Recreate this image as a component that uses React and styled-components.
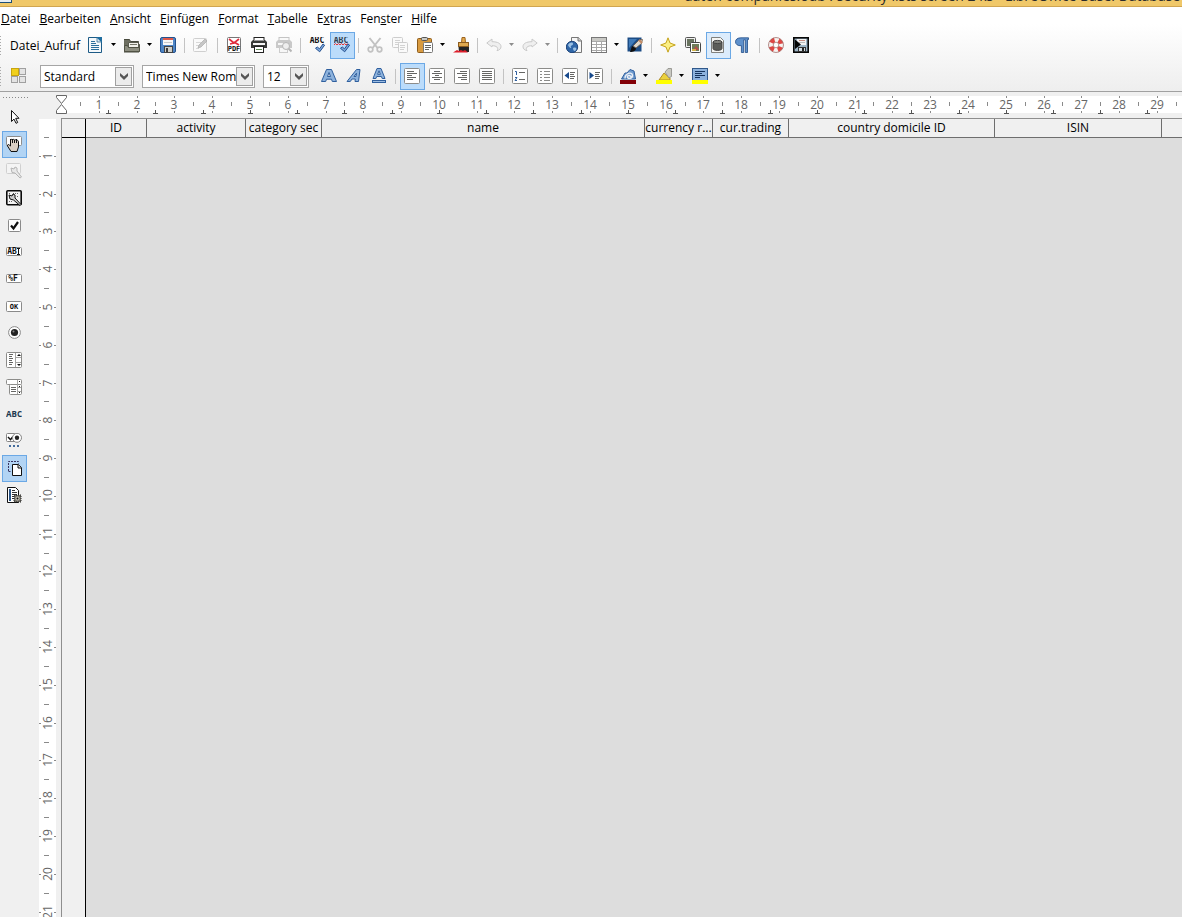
import React, { useEffect, useState } from 'react';
import styled, { createGlobalStyle } from 'styled-components';

// pixels per centimetre on both rulers
const CM = 37.79;
const BLUE = '#2f5f9e';

const menus = ['Datei', 'Bearbeiten', 'Ansicht', 'Einfügen', 'Format', 'Tabelle', 'Extras', 'Fenster', 'Hilfe'];
const hotkeys = { Extras: 1, Fenster: 3 };

const columns = [
  { label: 'ID', width: 61 },
  { label: 'activity', width: 99 },
  { label: 'category sec', width: 76 },
  { label: 'name', width: 323 },
  { label: 'currency r...', width: 68 },
  { label: 'cur.trading', width: 76 },
  { label: 'country domicile ID', width: 206 },
  { label: 'ISIN', width: 167 },
];

const Sheet = ({ x = 0, y = 0, w = 16, h = 16, fill = '#fff', stroke = '#8c8c8a' }) => (
  <rect x={x + 0.5} y={y + 0.5} width={w - 1} height={h - 1} rx="1" fill={fill} stroke={stroke} />
);

const Lines = ({ rows, color = '#666664' }) => (
  <g stroke={color} strokeWidth="1">
    {rows.map(([x1, y, x2], i) => <path key={i} d={`M${x1} ${y + 0.5}H${x2}`} />)}
  </g>
);

const IconText = ({ x, y, size = 7, fill = '#111', children }) => (
  <text x={x} y={y} fontSize={size} fontWeight="700" fontFamily="DejaVu Sans Mono, monospace" fill={fill} textAnchor="middle">{children}</text>
);

const Check = () => (
  <path d="M6.5 11.3L8.3 10l2.2 1.8L14 7l1.6 1.2-4.9 6.6z" fill="#7fa9dc" stroke="#24508f" strokeLinejoin="round" />
);

const icons = {
  newDoc: (
    <>
      <path d="M.5.5h8.5l4.5 4.5v10.500H.5z" fill="#f4f8fb" stroke="#1d5b86" />
      <path d="M8 0h6v6z" fill="#1f6d9f" />
      <path d="M9 1v4h4" fill="#dcebf4" stroke="#1d5b86" strokeWidth="0.7" />
      <Lines color="#2b6f9c" rows={[[3, 4, 7], [3, 6, 8], [3, 8, 11], [3, 10, 11], [3, 12, 11]]} />
    </>
  ),
  open: (
    <>
      <path d="M-.5 2.500h6l1 2h8v3h1l-.5 7.500H0z" fill="#6d6e60" stroke="#484a3e" />
      <path d="M4.500 5.500h10v6h-10z" fill="#f1f1ea" stroke="#5b5c50" />
      <path d="M6 7.500h7" stroke="#77786c" />
      <path d="M.5 14.500v-6h3l1 2h11v4z" fill="#8d8e80" stroke="#505244" />
    </>
  ),
  save: (
    <>
      <rect x=".5" y=".5" width="15" height="15" rx="1.5" fill="#4f86c6" stroke="#24518c" />
      <rect x="3" y="1" width="10" height="7" fill="#f8f8f8" />
      <rect x="3" y="1" width="10" height="2" fill="#df5a4c" />
      <path d="M4 5.500h8" stroke="#c9c9c9" />
      <rect x="4.5" y="9.5" width="8" height="6" fill="#cfcfc9" stroke="#444" />
      <rect x="6" y="11" width="2" height="4" fill="#3c3c3c" />
    </>
  ),
  edit: (
    <>
      <Sheet y={1} w={14} h={14} stroke="#cfcfcf" fill="#fafafa" />
      <Lines color="#d8d8d8" rows={[[3, 5, 8], [3, 8, 7], [3, 11, 6]]} />
      <path d="M5 11l1-3 6-6 2 2-6 6z" fill="#c6c6c6" stroke="#aaa" strokeWidth=".7" />
    </>
  ),
  pdf: (
    <>
      <Sheet x={1} w={14} stroke="#777" />
      <path d="M3 2l5 4 5-4M8 6L4 7M8 5l5 3" stroke="#e02b3c" strokeWidth="1.7" fill="none" />
      <IconText x={8} y={14}>PDF</IconText>
    </>
  ),
  print: (
    <>
      <rect x="3" y=".5" width="10" height="5" fill="#fff" stroke="#222" />
      <path d="M0 5l2-2h12l2 2v6H0z" fill="#393b39" />
      <path d="M3 3.500h10" stroke="#9a9a9a" />
      <rect x="2" y="6" width="12" height="2" fill="#f7f7f7" />
      <rect x="3.5" y="9.5" width="9" height="6" fill="#fff" stroke="#222" />
      <path d="M5 12.500h6" stroke="#5c8750" />
    </>
  ),
  preview: (
    <>
      <rect x="3" y=".5" width="10" height="5" fill="#f9f9f9" stroke="#c4c4c4" />
      <path d="M0 5l2-2h12l2 2v6H0z" fill="#c9c9c9" />
      <rect x="2" y="6" width="9" height="2" fill="#f7f7f7" />
      <rect x="3.5" y="10.5" width="8" height="5" fill="#f7f7f7" stroke="#ccc" />
      <circle cx="10" cy="9" r="3.5" fill="#eee" stroke="#b5b5b5" />
      <path d="M12.500 11.500l3 3" stroke="#b5b5b5" strokeWidth="2" />
    </>
  ),
  spell: (
    <>
      <IconText x={8} y={6} size={8}>ABC</IconText>
      <Check />
    </>
  ),
  autoSpell: (
    <>
      <IconText x={7} y={6} size={8} fill="#33414e">ABC</IconText>
      <path d="M0 8l1.500-1.500L3 8l1.500-1.500L6 8l1.500-1.500L9 8l1.500-1.500L12 8l1.500-1.500" fill="none" stroke="#e33" />
      <Check />
    </>
  ),
  cut: (
    <g fill="none" stroke="#c2c2c2">
      <path d="M2.500 1l8 10M13.500 1l-8 10" strokeWidth="2" />
      <circle cx="3.500" cy="12.500" r="2.300" strokeWidth="1.700" />
      <circle cx="12.500" cy="12.500" r="2.300" strokeWidth="1.700" />
    </g>
  ),
  copy: (
    <>
      <Sheet w={11} h={11} stroke="#cdcdcd" fill="#fafafa" />
      <Lines color="#d2d2d2" rows={[[3, 3, 8], [3, 5, 8], [3, 7, 6]]} />
      <Sheet x={6} y={5} w={10} h={11} stroke="#cdcdcd" fill="#fafafa" />
      <Lines color="#d2d2d2" rows={[[8, 8, 13], [8, 10, 13], [8, 12, 12]]} />
    </>
  ),
  paste: (
    <>
      <rect x=".5" y="1.5" width="14" height="14" rx="1" fill="#d99b40" stroke="#8c5c1d" />
      <rect x="4.5" y=".5" width="6" height="3" rx="1" fill="#c9c9c5" stroke="#555" />
      <Sheet x={6} y={5} w={10} h={11} stroke="#777" />
      <Lines rows={[[8, 8, 14], [8, 10, 14], [8, 12, 12]]} />
    </>
  ),
  brush: (
    <>
      <path d="M9 .5h3l.5 5.500h-4z" fill="#e5a94b" stroke="#9b6420" />
      <rect x="5.5" y="5.5" width="10" height="4" fill="#e0a94f" stroke="#8c5c20" />
      <path d="M5.500 10H16v5H6z" fill="#242424" />
      <path d="M0 15.500L4 13l2 1 2-1 2 1 2-1 3 2.500z" fill="#dd1e2b" />
    </>
  ),
  undo: <path d="M.8 6L6 2v2.700c6 0 9 2 9 5 0 2-1.600 3.500-4 4 2-3-.5-5-5-5V10z" fill="#efefef" stroke="#c9c9c9" />,
  redo: <path d="M15.200 6L10 2v2.700c-6 0-9 2-9 5 0 2 1.600 3.500 4 4-2-3 .5-5 5-5V10z" fill="#efefef" stroke="#c9c9c9" />,
  link: (
    <>
      <path d="M5.500.5h7l3 3v12h-10z" fill="#f6f6f6" stroke="#777" />
      <path d="M12 0v4h4" fill="#ccc" stroke="#777" />
      <circle cx="6" cy="10" r="5.700" fill="#2f66a8" stroke="#1d447b" />
      <path d="M2 8c2-3 5-3 5-1s-3 1-2 3-2 1-3-2zM7 11c3-1 4 0 3 2s-3 1-3-2z" fill="#9cc1e4" />
    </>
  ),
  table: (
    <>
      <rect x=".5" y=".5" width="15" height="15" fill="#fff" stroke="#777" />
      <path d="M1 1h14v3H1z" fill="#c9c9c5" />
      <path d="M1 4.500h14M1 7.500h14M1 10.500h14M1 13.500h14M5.500 4v11M10.500 4v11" stroke="#a9a9a9" />
    </>
  ),
  draw: (
    <>
      <path d="M.5.500h14v14H.5z" fill="#1c4c85" />
      <path d="M2 2h8L2 11z" fill="#3f7ab8" />
      <path d="M3 15l2-6 4 2c0 3-3 4-6 4z" fill="#111" />
      <path d="M6 9l6-6 3.500-.5-1 4L9 11z" fill="#ded8cd" stroke="#6a5642" strokeWidth=".8" />
      <path d="M12 3l3 3" stroke="#c38a62" strokeWidth="2" />
    </>
  ),
  star: <path d="M8 .8L10 6l5.300 2-5.300 2-2 5.200L6 10 .7 8 6 6z" fill="#fbef84" stroke="#c5a31a" />,
  gallery: (
    <>
      <Sheet w={11} h={11} stroke="#555" fill="#eee" />
      <rect x="2" y="2" width="7" height="7" fill="#69735f" />
      <Sheet x={5} y={5} w={11} h={11} stroke="#444" />
      <rect x="7" y="7" width="7" height="7" fill="#6f7c58" />
      <path d="M8 13l3-4 3 4z" fill="#b5514b" />
      <path d="M7 12h4v2H7z" fill="#d3b34a" />
    </>
  ),
  dataSources: (
    <>
      <path d="M1.500.5h9l3 3v12h-12z" fill="#f5f5f3" stroke="#80807d" />
      <path d="M3 5v6.500c0 2.500 9 2.500 9 0V5z" fill="#5b5c59" stroke="#444" />
      <ellipse cx="7.500" cy="5" rx="4.500" ry="1.600" fill="#83847f" stroke="#444" />
    </>
  ),
  pilcrow: <path d="M13.500.8v1.700h-1v13h-2.200V2.800H8.700v12.700H6.400V8.700C2.500 9 .5 7.200.5 4.800S2.500.8 6 .8z" fill="#5f91cc" stroke="#1f4b86" strokeWidth=".8" />,
  help: (
    <>
      <circle cx="8" cy="8" r="5.200" fill="none" stroke="#f7f3f0" strokeWidth="4.500" />
      <circle cx="8" cy="8" r="5.200" fill="none" stroke="#de4744" strokeWidth="4.500" strokeDasharray="4.080 4.080" strokeDashoffset="-2" />
      <circle cx="8" cy="8" r="7.500" fill="none" stroke="#96605c" strokeWidth=".7" />
      <circle cx="8" cy="8" r="2.800" fill="#fff" stroke="#96605c" strokeWidth=".7" />
    </>
  ),
  macro: (
    <>
      <rect x=".8" y=".8" width="14.400" height="14.400" fill="#9db4c5" stroke="#080808" strokeWidth="1.600" />
      <rect x="4" y="2" width="9" height="6" fill="#f2f2f2" />
      <path d="M6 3.500h6" stroke="#c78b80" />
      <path d="M6 5.500h6" stroke="#bbb" />
      <path d="M2 2.500L8 7.500 2 12z" fill="#050505" />
      <rect x="5.5" y="10.5" width="7" height="4" fill="#d3dce2" stroke="#333" />
      <rect x="9" y="11" width="2" height="3" fill="#222" />
    </>
  ),
  styles: (
    <>
      <rect x="1.5" y=".5" width="7" height="7" fill="#f1d01c" stroke="#c8a410" />
      <g fill="#e4e4e4" stroke="#a0a0a0">
        <rect x="9.5" y=".5" width="6" height="6" />
        <rect x="1.5" y="8.5" width="6" height="6" />
        <rect x="9.5" y="8.5" width="6" height="6" />
      </g>
    </>
  ),
  bold: <path d="M.5 13.500L5.500 1.500h5l5 12h-4.200l-.8-2.300h-5l-.8 2.300zM6.500 8.500h3L8 4.500z" fill="#8db2dc" stroke={BLUE} fillRule="evenodd" />,
  italic: <path d="M1 13.500L10.500 1.500h3.500l-1.500 12H9l.3-2.500H6l-1.700 2.500zM8 8.500h2l.5-3.300z" fill="#8db2dc" stroke={BLUE} fillRule="evenodd" />,
  underline: (
    <>
      <path d="M2 10.500L6 .5h4l4 10h-2.800l-.8-2H5.700l-.8 2zM6.600 6.300h2.800L8 2.800z" fill="#8db2dc" stroke={BLUE} fillRule="evenodd" />
      <rect x="1.5" y="12.5" width="13" height="2" fill="#9dbde2" stroke={BLUE} />
    </>
  ),
  left: <><Sheet /><Lines rows={[[3, 3, 10], [3, 5, 13], [3, 7, 8], [3, 9, 12], [3, 11, 9]]} /></>,
  center: <><Sheet /><Lines rows={[[5, 3, 11], [3, 5, 13], [6, 7, 10], [3, 9, 13], [5, 11, 11]]} /></>,
  right: <><Sheet /><Lines rows={[[6, 3, 13], [3, 5, 13], [8, 7, 13], [4, 9, 13], [7, 11, 13]]} /></>,
  justify: <><Sheet /><Lines rows={[[3, 3, 13], [3, 5, 13], [3, 7, 13], [3, 9, 13], [3, 11, 13]]} /></>,
  numbered: (
    <>
      <Sheet />
      <path d="M3 3.500h1.500V7M3 9.500h2L3 12.500h2" fill="none" stroke={BLUE} />
      <Lines rows={[[7, 4, 13], [7, 11, 13]]} />
    </>
  ),
  bullets: <><Sheet /><Lines rows={[[3, 3, 5], [3, 6, 5], [3, 9, 5], [3, 12, 5], [7, 3, 13], [7, 6, 13], [7, 9, 13], [7, 12, 13]]} color="#8b8b89" /></>,
  outdent: <><Sheet /><path d="M2.500 7.500L7 4v7z" fill="#184a8c" /><Lines rows={[[8, 4, 13], [8, 6, 12], [8, 8, 13], [8, 10, 12]]} /></>,
  indent: <><Sheet /><path d="M7 7.500L2.500 4v7z" fill="#184a8c" /><Lines rows={[[8, 4, 13], [8, 6, 12], [8, 8, 13], [8, 10, 12]]} /></>,
  fontColor: (
    <>
      <path d="M1.500 11L5 5h2l3-3.500 4 1.500 1.500 8z" fill="#6f9bcf" stroke={BLUE} />
      <path d="M5 10.500C5 5 12 3.500 12.500 7s-5 4.500-5 2 4-2 4 1.500" fill="none" stroke="#e9edf4" strokeWidth="1.400" />
      <rect y="12" width="16" height="4" fill="#830007" />
    </>
  ),
  highlight: (
    <>
      <path d="M3 12l5-7 6 5v2z" fill="#ead13d" stroke="#b28d22" />
      <path d="M9 4l3-3.500h3.500v8L13 10z" fill="#c8c8c2" stroke="#8a8a84" strokeWidth=".8" />
      <rect y="12" width="16" height="4" fill="#ff0" />
    </>
  ),
  background: (
    <>
      <rect x=".5" y=".5" width="15" height="12" fill="#8db2dd" stroke="#30588b" />
      <Lines color="#15335c" rows={[[3, 3, 13], [3, 5, 10], [3, 7, 13], [3, 9, 8]]} />
      <rect y="12" width="16" height="4" fill="#ff0" />
    </>
  ),
  pointer: <path d="M5.500 1.500v11l2.500-2.400 2 4.200 1.700-.8-2-4.200H13z" fill="#fff" stroke="#111" />,
  hand: (
    <>
      <rect x=".5" y=".5" width="15" height="9" rx="1" fill="#fff" stroke="#8d8d8d" />
      <path d="M4.500 10V4.500c0-1.500 2-1.500 2 0 0-1.500 2-1.500 2 0 0-1.200 2-1 2 .5 0-1 2-1 2 .7V11l-1.500 4.500H5L1.500 10c-.5-1.500 1-2 2-.8z" fill="#d9cfc4" stroke="#111" />
      <path d="M4.500 3v3M6.500 3v4M8.500 4v3M10.500 3v4" stroke="#111" />
    </>
  ),
  wrenchOff: (
    <>
      <Sheet w={15} h={11} stroke="#d0d0d0" fill="#f4f4f4" />
      <path d="M5 5l3 1 1-2 2 1v3l4.500 6-1.500 1-5-5-3-.5z" fill="#e8e8e8" stroke="#b5b5b5" />
    </>
  ),
  wrench: (
    <>
      <rect x=".8" y=".8" width="14.400" height="14" rx="1" fill="#f3f3f3" stroke="#0a0a0a" strokeWidth="1.600" />
      <path d="M3 3.500h2M7 3.500h6M11 6.500h2M3 11.500h3" stroke="#666" strokeDasharray="1 1" />
      <path d="M3 5l3 1 1-2 2 1v3l6 6.500-1 1L7.500 10 4 9z" fill="#ccc" stroke="#111" />
    </>
  ),
  checkbox: (
    <>
      <Sheet x={2} y={2} w={13} h={13} stroke="#8a8a8a" />
      <path d="M5 8.500l2.500 3L12 5" fill="none" stroke="#111" strokeWidth="2.200" />
    </>
  ),
  textBox: (
    <>
      <Sheet y={3} h={9} stroke="#8a8a8a" />
      <IconText x={6} y={10} size={8}>AB</IconText>
      <path d="M11 4.500h3M11 10.500h3M12.500 5v5" stroke="#111" />
    </>
  ),
  formatted: <><Sheet y={3} h={9} stroke="#8a8a8a" /><IconText x={7} y={10} size={8}>%F</IconText></>,
  okButton: <><Sheet y={3} h={11} stroke="#8a8a8a" /><IconText x={8} y={11}>OK</IconText></>,
  radio: (
    <>
      <circle cx="8.500" cy="7.500" r="5.900" fill="#fff" stroke="#8a8a8a" />
      <circle cx="8.500" cy="7.500" r="3.600" fill="#222" />
      <circle cx="7.500" cy="6.500" r="1" fill="#888" />
    </>
  ),
  listBox: (
    <>
      <Sheet />
      <path d="M9.500 1v14M10 5.500h5M10 10.500h5" stroke="#a5a5a3" />
      <Lines rows={[[3, 2, 7], [3, 4, 6], [3, 6, 7], [3, 8, 6], [3, 10, 7], [3, 12, 6]]} />
      <path d="M11 4h4l-2-2zM11 12h4l-2 2z" fill="#111" />
    </>
  ),
  comboBox: (
    <>
      <Sheet h={6} />
      <Sheet x={3} y={5} w={13} h={11} />
      <path d="M11.500 1v14M12 8.500h3M12 12.500h3" stroke="#a5a5a3" />
      <Lines rows={[[5, 8, 10], [5, 10, 10], [5, 12, 10]]} />
      <path d="M13 2h1v1h-1zM13 7h1v1h-1zM13 13h1v1h-1z" fill="#111" />
    </>
  ),
  label: <text x="8" y="11" fontSize="8" fontWeight="700" fontFamily="Open Sans, sans-serif" fill="#20384f" textAnchor="middle">ABC</text>,
  more: (
    <>
      <Sheet w={10} h={9} stroke="#858585" />
      <path d="M2 4l2.500 2.700L7 3.500" fill="none" stroke="#111" strokeWidth="1.500" />
      <circle cx="11" cy="4.800" r="4.500" fill="#fff" stroke="#858585" />
      <circle cx="11" cy="4.800" r="2.200" fill="#222" />
      <path d="M3 12h2v2H3zM7 12h2v2H7zM11 12h2v2h-2z" fill="#456d9c" />
    </>
  ),
  design: (
    <>
      <path d="M2.500 11V1.500h10v2M2.500 11.500h3" fill="none" stroke="#3a3560" strokeDasharray="2 1" />
      <path d="M6.500 4.500h6l3 3v8h-9z" fill="#fff" stroke="#111" />
      <path d="M12 4.500v3.500h3.500" fill="#ddd" stroke="#111" />
    </>
  ),
  wizard: (
    <>
      <path d="M1.500.5h8l3 3v12h-11z" fill="#fff" stroke="#111" />
      <path d="M3 2h2v12H3z" fill="#2c5688" />
      <Lines color="#333" rows={[[6, 3, 9], [6, 5, 11], [6, 7, 11], [6, 9, 8], [6, 11, 8]]} />
      <rect x="8" y="8" width="7" height="7" fill="#77756c" stroke="#222" strokeDasharray="1 1" />
      <circle cx="11.500" cy="11.500" r="2" fill="#c9c5b7" />
      <circle cx="11.500" cy="11.500" r="1" fill="#111" />
    </>
  ),
};

const standardBar = [
  ['newDoc', 'Neu', 'drop'], ['open', 'Öffnen', 'drop'], ['save', 'Speichern'], null,
  ['edit', 'Datei bearbeiten', 'off'], null,
  ['pdf', 'Als PDF exportieren'], ['print', 'Drucken'], ['preview', 'Seitenansicht', 'off'], null,
  ['spell', 'Rechtschreibung'], ['autoSpell', 'Automatische Rechtschreibprüfung', 'on'], null,
  ['cut', 'Ausschneiden', 'off'], ['copy', 'Kopieren', 'off'], ['paste', 'Einfügen', 'drop'], ['brush', 'Format übertragen'], null,
  ['undo', 'Rückgängig', 'off drop'], ['redo', 'Wiederherstellen', 'off drop'], null,
  ['link', 'Hyperlink'], ['table', 'Tabelle', 'drop'], ['draw', 'Zeichnen'], null,
  ['star', 'Navigator'], ['gallery', 'Gallery'], ['dataSources', 'Datenquellen', 'soft'], ['pilcrow', 'Steuerzeichen'], null,
  ['help', 'Hilfe'], ['macro', 'Makro'],
];

const formatBar = [
  ['bold', 'Fett'], ['italic', 'Kursiv'], ['underline', 'Unterstrichen'], null,
  ['left', 'Linksbündig', 'on'], ['center', 'Zentriert'], ['right', 'Rechtsbündig'], ['justify', 'Blocksatz'], null,
  ['numbered', 'Nummerierung'], ['bullets', 'Aufzählung'], ['outdent', 'Einzug verringern'], ['indent', 'Einzug erhöhen'], null,
  ['fontColor', 'Zeichenfarbe', 'drop'], ['highlight', 'Hervorheben', 'drop'], ['background', 'Hintergrundfarbe', 'drop'],
];

const controls = [
  ['pointer', 'Auswahl'], ['hand', 'Entwurfsmodus', 'on'], ['wrenchOff', 'Kontrollfeld', 'off'], ['wrench', 'Formular'],
  ['checkbox', 'Markierfeld'], ['textBox', 'Textfeld'], ['formatted', 'Formatiertes Feld'], ['okButton', 'Schaltfläche'],
  ['radio', 'Optionsfeld'], ['listBox', 'Listenfeld'], ['comboBox', 'Kombinationsfeld'], ['label', 'Beschriftungsfeld'],
  ['more', 'Weitere Steuerelemente'], ['design', 'Formular-Entwurf', 'on'], ['wizard', 'Assistenten'],
];

const Icon = ({ name }) => (
  <svg width="16" height="16" viewBox="0 0 16 16" aria-hidden="true">{icons[name]}</svg>
);

const ToolItems = ({ items }) => items.map((item, i) => {
  if (!item) return <Separator key={i} />;
  const [name, title, flags = ''] = item;
  const off = flags.includes('off');
  return (
    <React.Fragment key={i}>
      <ToolButton type="button" aria-label={title} disabled={off} $state={flags}>
        <Icon name={name} />
      </ToolButton>
      {flags.includes('drop') && (
        <DropButton type="button" aria-label={`${title}: Auswahl`} disabled={off}>
          <svg width="5" height="3" viewBox="0 0 5 3"><path d="M0 0h5L2.500 3z" fill={off ? '#8d8d8d' : '#000'} /></svg>
        </DropButton>
      )}
    </React.Fragment>
  );
});

const Combo = ({ label, value, width }) => (
  <ComboBox $width={width}>
    <ComboSelect aria-label={label} defaultValue={value}>
      <option>{value}</option>
    </ComboSelect>
    <ComboArrow>
      <svg width="8" height="7" viewBox="0 0 8 7"><path d="M0 0l4 3.500L8 0v3L4 7 0 3z" fill="#555" /></svg>
    </ComboArrow>
  </ComboBox>
);

const MenuLabel = ({ text }) => {
  const at = hotkeys[text] || 0;
  return <>{text.slice(0, at)}<u>{text[at]}</u>{text.slice(at + 1)}</>;
};

const range = (n) => Array.from({ length: n }, (_, i) => i + 1);

const useWindowSize = () => {
  const read = () => ({ width: window.innerWidth, height: window.innerHeight });
  const [size, setSize] = useState(read);
  useEffect(() => {
    const onResize = () => setSize(read());
    window.addEventListener('resize', onResize);
    return () => window.removeEventListener('resize', onResize);
  }, []);
  return size;
};

const HorizontalRuler = ({ length }) => {
  const count = Math.floor(length / CM);
  return (
    <RulerTop>
      <svg width="100%" height="22" shapeRendering="crispEdges">
        <rect x="5" y="4" width="100%" height="17" fill="#fff" />
        {range(count).map((n) => {
          const x = Math.round(n * CM) + 5;
          return (
            <g key={n} fill="#8a8a8a">
              <rect x={x} y="4" width="1" height="2" />
              <rect x={x} y="19" width="1" height="2" />
              <RulerText x={x} y="17">{n}</RulerText>
            </g>
          );
        })}
        {range(count + 1).map((n) => (
          <rect key={n} x={Math.round((n - 0.5) * CM) + 5} y="10" width="1" height="4" fill="#8a8a8a" />
        ))}
        {range(count).map((n) => {
          const x = Math.round(n * CM * 1.25) + 5;
          return <path key={n} d={`M${x} 18h1v3h2v1h-5v-1h2z`} fill="#555" />;
        })}
        <g shapeRendering="auto" fill="#fff" stroke="#666">
          <path d="M.5 3.500h10v2l-5 6-5-6z" />
          <path d="M.5 21.500h10v-3l-5-6-5 6z" />
        </g>
      </svg>
    </RulerTop>
  );
};

const VerticalRuler = ({ length }) => {
  const count = Math.floor(length / CM);
  return (
    <RulerLeft>
      <svg width="17" height="100%" shapeRendering="crispEdges">
        {range(count).map((n) => {
          const y = Math.round(n * CM) - 1;
          return (
            <g key={n} fill="#8a8a8a">
              <rect x="0" y={y} width="2" height="1" />
              <rect x="15" y={y} width="2" height="1" />
              <RulerText transform={`translate(13 ${y}) rotate(-90)`}>{n}</RulerText>
            </g>
          );
        })}
        {range(count + 1).map((n) => (
          <rect key={n} x="5" y={Math.round((n - 0.5) * CM) - 1} width="5" height="1" fill="#8a8a8a" />
        ))}
      </svg>
    </RulerLeft>
  );
};

const App = () => {
  const { width, height } = useWindowSize();
  return (
    <Window>
      <GlobalStyle />
      <TitleBar>
        <WindowIcon />
        <Title>daten companies.odb : security lists screen 2 ks - LibreOffice Base: Database</Title>
      </TitleBar>
      <Chrome>
        <MenuBar>
          {menus.map((text) => <MenuItem key={text} type="button"><MenuLabel text={text} /></MenuItem>)}
        </MenuBar>
        <Toolbar>
          <Grip />
          <MacroButton type="button">Datei_Aufruf</MacroButton>
          <ToolItems items={standardBar} />
        </Toolbar>
        <Toolbar>
          <Grip />
          <StylesButton type="button" aria-label="Formatvorlagen"><Icon name="styles" /></StylesButton>
          <Combos>
            <Combo label="Vorlage" value="Standard" width={94} />
            <Combo label="Schriftart" value="Times New Roman" width={113} />
            <Combo label="Schriftgröße" value="12" width={46} />
          </Combos>
          <ToolItems items={formatBar} />
        </Toolbar>
      </Chrome>
      <Workspace>
        <Sidebar>
          <SideGrip />
          {controls.map(([name, title, flags = '']) => (
            <SideButton key={name} type="button" aria-label={title} $state={flags}><Icon name={name} /></SideButton>
          ))}
        </Sidebar>
        <Editor>
          <HorizontalRuler length={width - 61} />
          <VerticalRuler length={height - 118} />
          <Grid>
            <HeaderTable>
              <colgroup>
                <Col $width={24} />
                {columns.map((c) => <Col key={c.label} $width={c.width} />)}
                <col />
              </colgroup>
              <thead>
                <tr>
                  <CornerCell />
                  {columns.map((c) => <HeaderCell key={c.label} scope="col">{c.label}</HeaderCell>)}
                  <LastCell />
                </tr>
              </thead>
            </HeaderTable>
            <GridBody><RowGutter /></GridBody>
          </Grid>
        </Editor>
      </Workspace>
    </Window>
  );
};

export default App;

const GlobalStyle = createGlobalStyle`
  * {
    box-sizing: border-box;
  }
  body {
    margin: 0;
  }
  body, button, select {
    font-family: 'Open Sans', 'Noto Sans', sans-serif;
    font-size: 12px;
    color: #000;
  }
  button {
    border: 0;
    padding: 0;
    background: none;
  }
  svg {
    display: block;
    flex: none;
  }
`
const Window = styled.div`
  display: flex;
  flex-direction: column;
  height: 100vh;
  overflow: hidden;
  background: #f0f0f0;
`
const TitleBar = styled.header`
  display: flex;
  flex: none;
  align-items: flex-end;
  justify-content: space-between;
  height: 7px;
  overflow: hidden;
  background: #f0c869;
  border-bottom: 1px solid #d0a550;
`
const WindowIcon = styled.span`
  width: 12px;
  height: 3px;
  margin-bottom: 3px;
  background: #e8eef2;
  border: solid #1d4f78;
  border-width: 0 1px 1px 0;
`
const Title = styled.span`
  flex: none;
  width: 498px;
  overflow: hidden;
  font-size: 14px;
  line-height: 20px;
  white-space: nowrap;
  color: #2b2b2b;
`
const Chrome = styled.div`
  flex: none;
  background: linear-gradient(#fff 20%, #eeeeee);
  border-bottom: 1px solid #a0a0a0;
`
const MenuBar = styled.nav`
  display: flex;
  gap: 9px;
  height: 23px;
  padding-left: 1px;
`
const MenuItem = styled.button`
  line-height: 23px;
`
const Toolbar = styled.div`
  display: flex;
  align-items: center;
  padding: 2px 0;
  &:last-child {
    padding-bottom: 1px;
  }
`
const Grip = styled.span`
  flex: none;
  width: 1px;
  height: 19px;
  background: repeating-linear-gradient(#aaa 0 1px, transparent 1px 3px);
`
const MacroButton = styled.button`
  width: 83px;
  padding-left: 9px;
  text-align: left;
  white-space: nowrap;
`
const ToolButton = styled.button`
  display: flex;
  flex: none;
  align-items: flex-start;
  width: 25px;
  height: 27px;
  padding: 5px 0 0 4px;
  background: ${(p) => (p.$state.includes('on') ? '#bbdcfb' : p.$state.includes('soft') ? '#dcecfc' : 'none')};
  box-shadow: ${(p) => (p.$state.includes('on') || p.$state.includes('soft') ? 'inset 0 0 0 1px #6ba8e5' : 'none')};
`
const DropButton = styled.button`
  display: flex;
  flex: none;
  align-items: flex-start;
  justify-content: center;
  width: 9px;
  height: 27px;
  margin-right: 2px;
  padding-top: 11px;
`
const Separator = styled.span`
  flex: none;
  width: 1px;
  height: 15px;
  margin: 0 4px 0 3px;
  background: #c3c3c3;
`
const StylesButton = styled.button`
  width: 39px;
  height: 27px;
  padding: 5px 0 6px 9px;
`
const Combos = styled.div`
  display: flex;
  gap: 8px;
  padding-right: 8px;
`
const ComboBox = styled.span`
  display: flex;
  width: ${(p) => p.$width}px;
  height: 23px;
  padding: 1px;
  background: #fff;
  border: 1px solid #a5a5a5;
`
const ComboSelect = styled.select`
  flex: 1;
  min-width: 0;
  padding: 0 0 0 2px;
  overflow: hidden;
  appearance: none;
  background: none;
  border: 0;
`
const ComboArrow = styled.span`
  display: flex;
  flex: none;
  align-items: center;
  justify-content: center;
  width: 17px;
  background: #ececec;
  border: 1px solid #a0a0a0;
`
const Workspace = styled.div`
  display: flex;
  flex: 1;
  min-height: 0;
`
const Sidebar = styled.aside`
  flex: none;
  width: 39px;
  padding: 5px 0 0 2px;
`
const SideGrip = styled.div`
  width: 27px;
  height: 1px;
  margin: 0 0 6px 1px;
  background: repeating-linear-gradient(90deg, #888 0 1px, transparent 1px 3px);
`
const SideButton = styled(ToolButton)`
  background: ${(p) => (p.$state.includes('on') ? '#b2d4f4' : 'none')};
`
const Editor = styled.main`
  display: grid;
  grid-template-columns: 22px 1fr;
  grid-template-rows: 26px 1fr;
  flex: 1;
  min-width: 0;
`
const RulerTop = styled.div`
  grid-column: 1 / 3;
  padding-left: 17px;
  overflow: hidden;
`
const RulerLeft = styled.div`
  width: 17px;
  min-height: 0;
  margin-top: 1px;
  overflow: hidden;
  background: #fff;
`
const RulerText = styled.text`
  font-size: 12px;
  text-anchor: middle;
  fill: #666;
`
const Grid = styled.section`
  display: flex;
  flex-direction: column;
  min-width: 0;
  min-height: 0;
  overflow: hidden;
  background: #ddd;
  border: solid #8e8e8e;
  border-width: 1px 0 0 1px;
`
const HeaderTable = styled.table`
  flex: none;
  width: 100%;
  table-layout: fixed;
  border-spacing: 0;
  background: #f0f0f0;
`
const Col = styled.col`
  width: ${(p) => p.$width}px;
`
const HeaderCell = styled.th`
  height: 19px;
  padding: 0;
  overflow: hidden;
  font-weight: 400;
  line-height: 18px;
  text-align: center;
  white-space: nowrap;
  border: solid #6e6e6e;
  border-width: 0 1px 1px 0;
`
const CornerCell = styled.td`
  padding: 0;
  border: solid #000;
  border-width: 0 1px 1px 0;
`
const LastCell = styled.td`
  padding: 0;
  border-bottom: 1px solid #6e6e6e;
`
const GridBody = styled.div`
  display: flex;
  flex: 1;
`
const RowGutter = styled.div`
  width: 24px;
  background: #f0f0f0;
  border-right: 1px solid #000;
`
